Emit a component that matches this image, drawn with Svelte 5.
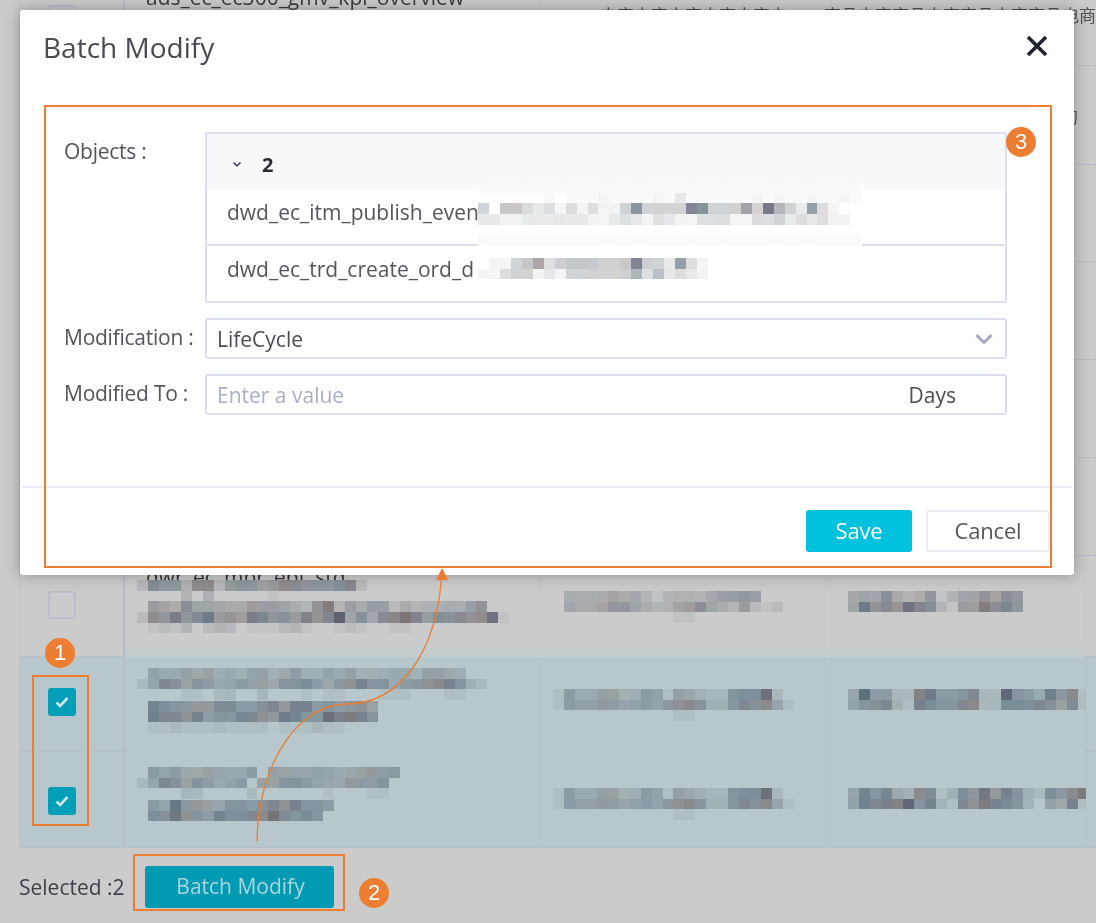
<script>
  const tints = ['#3b3f55', '#45586a', '#5a5050', '#3f5560', '#4a4a58'];
  const level = (c) => (c === '.' ? 0.035 : parseInt(c, 16) / 15);
  const CW = 10.95;
  const CH = 10.67;
  function cells(rows) {
    const out = [];
    rows.forEach((row, j) => {
      [...row].forEach((c, i) => {
        if (c !== '0') {
          const x = Math.round(i * CW);
          const y = Math.round(j * CH);
          out.push({
            x,
            y,
            w: Math.round((i + 1) * CW) - x,
            h: Math.round((j + 1) * CH) - y,
            o: level(c) * 0.95,
            f: tints[(i * 7 + j * 3 + (i % 3)) % 5]
          });
        }
      });
    });
    return out;
  }
  const size = (rows) => ({ w: Math.ceil(Math.max(...rows.map((r) => r.length)) * CW), h: Math.ceil(rows.length * CH) });

  const data = {
    r7a: ['287738826775687677882', '00003030000010000000', '06547555446555437a35466243334467', '2869 79b676997869 78c58589b868887 8a1'.replace(/ /g, ''), '012130232011123100121001100'],
    r7b: ['0444454431333345676', '0544566543356754362 12'.replace(/ /g, ''), '00000000000110'],
    r7c: ['4558434613557576', '5b787a883166a797'],
    s1a: ['0544545343553453354533344355430', '25875654565546786467867466788732', '00001102200200010110001110001100'],
    s1b: ['0987666786678688676675', '0a887857798769977b9a86', '0112111211110111211'],
    s2a: ['065644544460554455445656', '25875654560556765446557', '000022000020000001000110'],
    s2b: ['065b66547767878676', '087a76598888b77870'],
    cs1: ['1644553365154322788b2', '16556545656786337878 41'.replace(/ /g, ''), '00000000000110'],
    cs2: ['1644553365154322788b2', '16556545656786337878 41'.replace(/ /g, ''), '00000000000110'],
    ds1: ['4c66229966782 2b664a681'.replace(/ /g, ''), '5778318877882288887571'],
    ds2: ['49794387138 6a6863286 8a1'.replace(/ /g, ''), '5a899b693187a88 7305481'.replace(/ /g, '')],
    mo1: ['...................................', '000000.0...1....1.2......1.1..1..1.', '4055323131311 4a4444aa44484b642931'.replace(/ /g, ''), '2211222222112321321133311334232311', '0000000000000000000000000000000000', '...................................'],
    mo2: ['011458345554 45a4429 31'.replace(/ /g, ''), '113441 2144444473 62321'.replace(/ /g, '')]
  };
  const mos = Object.fromEntries(Object.entries(data).map(([k, rows]) => [k, { ...size(rows), cells: cells(rows) }]));
  const plain = [0, 1, 2, 3];
</script>

{#snippet mosaic(name, cls)}
  <svg class={cls} width={mos[name].w} height={mos[name].h} shape-rendering="crispEdges" aria-hidden="true">
    {#each mos[name].cells as c}
      <rect x={c.x} y={c.y} width={c.w} height={c.h} fill={c.f} fill-opacity={c.o} />
    {/each}
  </svg>
{/snippet}

{#snippet check()}
  <span class="box on">
    <svg width="16" height="14" viewBox="0 0 16 14"><path d="M2.500 7.500 6.200 11 13.500 3" fill="none" stroke="#cfe6ea" stroke-width="2.600" /></svg>
  </span>
{/snippet}

{#snippet blankRow()}
  <div class="c first-col row-line"></div>
  <div class="c row-line"></div>
  <div class="c row-line"></div>
  <div class="c row-line"></div>
  <div class="c end row-line"></div>
{/snippet}

<div class="page">
  <div class="table">
    <div class="c first-col row-line"><span class="box box-top"></span></div>
    <div class="c row-line"><span class="name name-top">ads_ec_ec300_gmv_kpi_overview</span></div>
    <div class="c row-line"><span class="cjk cjk-a">电商电商电商电商电商电</span></div>
    <div class="c row-line"><span class="cjk cjk-b">商品电商商品电商商品电商商品电商</span></div>
    <div class="c end row-line"></div>

    <div class="c first-col row-line"></div>
    <div class="c row-line"></div>
    <div class="c row-line"></div>
    <div class="c row-line"><span class="cjk cjk-c">商品统计指标的</span></div>
    <div class="c end row-line"></div>

    {#each plain as _}
      {@render blankRow()}
    {/each}

    <div class="c first-col row-line"><span class="box box-empty"></span></div>
    <div class="c"><span class="name name-low">dwr_ec_mbr_ept_std</span>{@render mosaic('r7a', 'ma r7-a')}<i class="band"></i></div>
    <div class="c">{@render mosaic('r7b', 'ma r7-b')}<i class="band"></i></div>
    <div class="c">{@render mosaic('r7c', 'ma r7-c')}<i class="band"></i></div>
    <div class="c end row-line"></div>

    <div class="c first-col sel row-line sel-one">{@render check()}</div>
    <div class="c sel stack">{@render mosaic('s1a', 'ma cell-a')}{@render mosaic('s1b', 'ma cell-a')}</div>
    <div class="c sel">{@render mosaic('cs1', 'ma s1-b')}</div>
    <div class="c sel">{@render mosaic('ds1', 'ma s1-c')}</div>
    <div class="c end sel row-line"></div>

    <div class="c first-col sel row-line sel-two">{@render check()}</div>
    <div class="c sel bottom stack stack-low">{@render mosaic('s2a', 'ma cell-a')}{@render mosaic('s2b', 'ma cell-a')}</div>
    <div class="c sel bottom">{@render mosaic('cs2', 'ma s2-b')}</div>
    <div class="c sel bottom">{@render mosaic('ds2', 'ma s2-c')}</div>
    <div class="c end sel row-line"></div>
  </div>

  <div class="bar">
    <span class="selected">Selected :2</span>
    <button class="batch">Batch Modify</button>
  </div>

  <div class="modal">
    <header>
      <h2>Batch Modify</h2>
      <svg class="close" width="22" height="22" viewBox="0 0 22 22"><path d="M2 2 20 20M20 2 2 20" stroke="#20232e" stroke-width="3.600" fill="none" /></svg>
    </header>
    <div class="form">
      <span class="label">Objects :</span>
      <div class="objbox">
        <div class="objhead">
          <svg width="10" height="7" viewBox="0 0 10 7"><path d="M1.500 1.500 5 5l3.500-3.500" fill="none" stroke="#3c4050" stroke-width="1.500" /></svg>
          <b>2</b>
        </div>
        <div class="objrow">dwd_ec_itm_publish_event</div>
        <div class="objrow objrow-next">dwd_ec_trd_create_ord_d</div>
      </div>
      <span class="label">Modification :</span>
      <div class="control select">
        <span>LifeCycle</span>
        <svg width="18" height="12" viewBox="0 0 18 12"><path d="M1.500 2 9 9.500 16.500 2" fill="none" stroke="#a4a9c2" stroke-width="3" /></svg>
      </div>
      <span class="label">Modified To :</span>
      <div class="control input">
        <span class="ph">Enter a value</span>
        <span class="days">Days</span>
      </div>
    </div>
    <footer>
      <button class="save">Save</button>
      <button class="cancel">Cancel</button>
    </footer>
    <div class="veil veil-a">{@render mosaic('mo1', 'ma')}</div>
    <div class="veil veil-b">{@render mosaic('mo2', 'ma')}</div>
  </div>

  <i class="hl hl-modal"></i>
  <i class="hl hl-checks"></i>
  <i class="hl hl-button"></i>
  <span class="badge badge-3">3</span>
  <span class="badge badge-1">1</span>
  <span class="badge badge-2">2</span>

  <svg class="arrow" width="1096" height="923" viewBox="0 0 1096 923" aria-hidden="true">
    <path d="M257 841C258 772 292 706 346 704C402 704 436 650 441.500 578" fill="none" stroke="#ed7d31" stroke-width="1.300" />
    <path d="M442 568 448 580H436Z" fill="#ed7d31" />
  </svg>
</div>

<style>
  :global(body) { margin: 0; background: #cbcbcb; }
  .page {
    position: relative;
    width: 1096px;
    height: 923px;
    overflow: hidden;
    background: #cbcbcb;
    font-family: "Open Sans", "Noto Sans CJK SC", sans-serif;
    filter: blur(0.35px);
  }
  .table {
    display: grid;
    grid-template-columns: 105px 415px 292px 254px 30px;
    grid-template-rows: 98px 99px 97px 98px 98px 98px 101px 95px 96px;
    margin: -32px 0 0 19px;
    border-left: 1px solid #bcbfca;
    width: max-content;
  }
  .c { position: relative; border-right: 1px solid #c4c6ce; min-width: 0; box-sizing: border-box; }
  .c.end { border-right: 0; }
  .row-line { border-bottom: 1px solid #b9bcc8; }
  .sel { background: #b7c7cb; border-right-color: #b4c2c8; }
  .bottom { border-bottom: 1px solid #b5bccb; }
  .first-col { border-right: 2px solid #b9bcc8; }
  .sel-one { padding-top: 31px; }
  .sel-two { padding-top: 35px; }
  .box {
    display: flex;
    align-items: center;
    justify-content: center;
    width: 28px;
    height: 28px;
    margin-left: 28px;
    box-sizing: border-box;
    border: 2px solid #b8bccd;
    border-radius: 3px;
  }
  .box-top { margin-top: 37px; }
  .box-empty { margin-top: 35px; }
  .box.on { background: #009fb8; border-color: #009fb8; }
  .name { display: block; font-size: 21px; line-height: 24px; color: #3c3c44; white-space: nowrap; margin-left: 21px; }
  .name-top { margin-top: 17px; }
  .name-low { position: absolute; top: 9px; height: 15px; overflow: hidden; color: #33333b; }
  .cjk { position: absolute; font-size: 17px; line-height: 20px; color: #50505a; white-space: nowrap; }
  .cjk-a { left: 60px; top: 38px; }
  .cjk-b { right: -11px; top: 38px; }
  .cjk-c { right: 7px; top: 41px; }
  .ma { display: block; }
  .r7-a { position: absolute; left: 12px; top: 24px; }
  .r7-b { margin: 35px 0 0 13px; }
  .r7-c { margin: 35px 0 0 16px; }
  .stack { padding-top: 11px; }
  .stack-low { padding-top: 15px; }
  .cell-a { margin-left: 12px; }
  .s1-b { margin: 32px 0 0 13px; }
  .s1-c { margin: 32px 0 0 16px; }
  .s2-b { margin: 36px 0 0 13px; }
  .s2-c { margin: 36px 0 0 16px; }
  .band { position: absolute; left: 0; right: -1px; bottom: 0; height: 11px; background: #c5cccd; }

  .bar { display: flex; align-items: center; margin: 18px 0 0 19px; }
  .selected { font-size: 21px; line-height: 42px; color: #3f3f4a; width: 126px; white-space: nowrap; }
  .batch {
    width: 189px;
    height: 42px;
    border: 0;
    border-radius: 3px;
    background: #009ab3;
    color: #a9d6de;
    font: 400 21px/40px "Open Sans", sans-serif;
    padding: 0 0 2px 2px;
  }

  .modal {
    position: absolute;
    left: 20px;
    top: 10px;
    width: 1054px;
    height: 565px;
    box-sizing: border-box;
    background: #fff;
    border-radius: 3px;
    box-shadow: 0 0 16px rgba(0, 0, 0, 0.3);
    display: flex;
    flex-direction: column;
  }
  header { display: flex; justify-content: space-between; height: 122px; padding: 0 26px 0 23px; box-sizing: border-box; }
  h2 { margin: 17px 0 0; font-size: 28px; line-height: 40px; font-weight: 400; color: #4a4a52; }
  .close { margin-top: 25px; }
  .form {
    display: grid;
    grid-template-columns: 141px 802px;
    row-gap: 15px;
    padding-left: 44px;
    height: 354px;
    align-content: start;
  }
  .label { font-size: 21px; line-height: 39px; color: #54545c; letter-spacing: -0.25px; white-space: nowrap; }
  .objbox { border: 2px solid #dcdfef; border-radius: 2px; height: 171px; box-sizing: border-box; }
  .objhead { display: flex; align-items: center; height: 55px; background: #f7f8fa; padding: 6px 0 0 25px; box-sizing: border-box; gap: 20px; }
  .objhead b { font-size: 20px; color: #2c2c34; font-weight: 700; }
  .objrow { height: 55px; padding: 5px 0 0 20px; font-size: 21px; line-height: 36px; color: #55555d; box-sizing: border-box; white-space: nowrap; }
  .objrow-next { border-top: 2px solid #dcdfef; height: 57px; padding-top: 5px; }
  .control {
    display: flex;
    align-items: center;
    justify-content: space-between;
    border: 2px solid #dcdfef;
    border-radius: 3px;
    height: 41px;
    padding: 0 12px 0 10px;
    box-sizing: border-box;
    font-size: 21px;
    color: #4b4b54;
  }
  .input { padding-right: 49px; }
  .ph { color: #a9aec7; }
  footer {
    flex: 1;
    display: flex;
    justify-content: flex-end;
    gap: 14px;
    margin: 0 3px 0 2px;
    padding: 22px 21px 0 0;
    border-top: 2px solid #eaecf6;
    box-sizing: border-box;
  }
  footer button { height: 42px; border-radius: 3px; font: 400 22px/36px "Open Sans", sans-serif; letter-spacing: -0.2px; padding: 0 0 3px; }
  .save { width: 106px; border: 0; background: #00c1de; color: #fff; }
  .cancel { width: 124px; border: 2px solid #ebedf5; background: #fff; color: #55555d; }
  .veil { position: absolute; background: #fff; line-height: 0; }
  .veil-a { left: 458px; top: 172px; }
  .veil-b { left: 458px; top: 248px; }

  .hl { position: absolute; box-sizing: border-box; border: 2px solid #ed7d31; pointer-events: none; }
  .hl-modal { left: 44px; top: 105px; width: 1008px; height: 463px; }
  .hl-checks { left: 32px; top: 675px; width: 57px; height: 151px; }
  .hl-button { left: 133px; top: 854px; width: 212px; height: 57px; }
  .badge {
    position: absolute;
    width: 30px;
    height: 30px;
    border-radius: 50%;
    background: #ed7d31;
    color: #fff;
    font: 400 22px/30px "Liberation Sans", sans-serif;
    text-align: center;
  }
  .badge-3 { left: 1006px; top: 127px; }
  .badge-1 { left: 45px; top: 638px; }
  .badge-2 { left: 359px; top: 878px; }
  .arrow { position: absolute; left: 0; top: 0; pointer-events: none; }
</style>
